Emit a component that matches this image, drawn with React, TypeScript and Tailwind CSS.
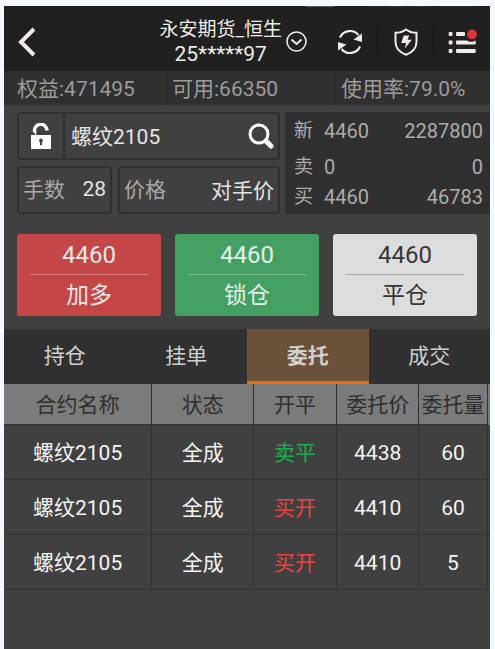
import { useState } from 'react';

const TABS = ['持仓', '挂单', '委托', '成交'];

const COLUMNS = ['合约名称', '状态', '开平', '委托价', '委托量'];

const ORDERS = [
  { id: 1, name: '螺纹2105', state: '全成', side: '卖平', price: 4438, lots: 60 },
  { id: 2, name: '螺纹2105', state: '全成', side: '买开', price: 4410, lots: 60 },
  { id: 3, name: '螺纹2105', state: '全成', side: '买开', price: 4410, lots: 5 },
];

const QUOTES = [
  { label: '新', price: '4460', volume: '2287800', row: 'h-9' },
  { label: '卖', price: '0', volume: '0', row: 'h-9' },
  { label: '买', price: '4460', volume: '46783', row: 'h-6' },
];

const ACTIONS = [
  { label: '加多', tone: 'bg-[#c44646] text-[#f3e6e6]', rule: 'bg-[#d77f7f]' },
  { label: '锁仓', tone: 'bg-[#43a062] text-[#e6f3ea]', rule: 'bg-[#7dbd91]' },
  { label: '平仓', tone: 'bg-[#dcdcdc] text-[#363636]', rule: 'bg-[#a8a8a8]' },
];

function StatusEdge() {
  return (
    <div className="flex h-0.5 justify-end gap-2 bg-[#202020] pr-4" aria-hidden="true">
      <span className="h-px w-7 bg-[#555]" />
      <span className="h-px w-5" />
      <span className="h-px w-3 bg-[#303030]" />
      <span className="h-px w-3 bg-[#3a3a3a]" />
      <span className="h-px w-5 bg-[#343434]" />
      <span className="h-px w-9 bg-[#303030]" />
    </div>
  );
}

function Header() {
  const action = 'flex h-full w-14 items-center justify-center pt-1';
  const divider = '-ml-px h-7 w-px bg-[#121212]';
  return (
    <header className="flex h-[63px] items-center bg-[#202020] text-[#efece6]">
      <button type="button" aria-label="返回" className="flex h-full w-14 items-center pt-1 pl-[14px]">
        <svg width="18" height="30" viewBox="0 0 18 30" fill="none" stroke="currentColor" strokeWidth="4">
          <path d="M16 2 3 15l13 13" />
        </svg>
      </button>
      <button type="button" aria-label="切换账户" className="flex flex-1 items-center justify-end gap-1 pt-1 pr-[15px]">
        <span className="flex flex-col text-center leading-6">
          <span className="text-[19px]">永安期货_恒生</span>
          <span className="text-[21px]">25*****97</span>
        </span>
        <svg width="21" height="21" viewBox="0 0 21 21" fill="none" stroke="currentColor" strokeWidth="1.6">
          <circle cx="10.5" cy="10.5" r="9.5" />
          <path d="m5.500 8.500 5 4.500 5-4.500" strokeWidth="2" />
        </svg>
      </button>
      <button type="button" aria-label="刷新" className={action}>
        <svg width="26" height="26" viewBox="0 0 26 26" fill="none" stroke="currentColor" strokeWidth="2.2">
          <path d="M3 8.500A11 11 0 0 1 21.500 6" />
          <path d="M23 17.500A11 11 0 0 1 4.500 20" />
          <path d="M25 4.500v8.500l-8.500-2.500z" fill="currentColor" stroke="none" />
          <path d="M1 21.500v-8.500l8.500 2.500z" fill="currentColor" stroke="none" />
        </svg>
      </button>
      <span className={divider} />
      <button type="button" aria-label="安全" className={action}>
        <svg width="24" height="28" viewBox="0 0 24 28" fill="none" stroke="currentColor" strokeWidth="2">
          <path d="M12 1.500C9 3.800 5.500 4.800 1.500 4.800V14c0 6.500 4.500 10.500 10.500 12.800C18 24.500 22.500 20.500 22.500 14V4.800C18.500 4.800 15 3.800 12 1.500z" />
          <path d="M9.800 7.500h5.400l-1.700 4.200h4.300L10.800 20.500l1.200-5.500H7.200z" fill="currentColor" stroke="none" />
        </svg>
      </button>
      <span className={divider} />
      <button type="button" aria-label="菜单" className={action}>
        <svg width="30" height="26" viewBox="0 0 30 26" fill="currentColor">
          <rect x="1.700" y="3" width="3.800" height="4" rx="1" />
          <rect x="9" y="3" width="9" height="4" rx="1" />
          <rect x="1.700" y="11.500" width="3.800" height="4" rx="1" />
          <path d="M10 11.500h10c2 1.700 6.500 1.700 8.700 0v3a1 1 0 0 1-1 1H10a1 1 0 0 1-1-1v-2a1 1 0 0 1 1-1z" />
          <rect x="1.700" y="20" width="3.800" height="4" rx="1" />
          <rect x="9" y="20" width="19.700" height="4" rx="1" />
          <circle cx="25" cy="5.300" r="4.900" fill="#dd3535" />
        </svg>
      </button>
    </header>
  );
}

function Stats() {
  return (
    <div className="grid h-[34px] grid-cols-[164fr_168fr_154fr] grid-rows-1 bg-[#303030] text-[21px] leading-[36px] text-[#9c9c9c]">
      <span className="border-r border-[#262626] pl-[13px]">权益:471495</span>
      <span className="border-r border-[#262626] pl-1">可用:66350</span>
      <span className="pl-[5px]">使用率:79.0%</span>
    </div>
  );
}

function TradeForm() {
  const box = 'flex h-12 min-w-0 items-center rounded-[3px] border-2 border-[#303030]';
  const field = 'h-full w-0 min-w-0 flex-1 bg-transparent pb-0.5 outline-none';
  const caption = 'shrink-0 pt-0.5 text-[#a8a8a8]';
  return (
    <div className="grid grid-cols-[263fr_205fr] gap-[5px] pt-[7px] pl-[13px]">
      <form className="flex min-w-0 flex-col gap-1.5 text-[21px] text-[#e4e4e4]">
        <div className={box}>
          <button type="button" aria-label="锁定合约" className="flex h-full w-[46px] items-center justify-center border-r-2 border-[#303030]">
            <svg width="20" height="26" viewBox="0 0 20 26">
              <path d="M3.500 9V7.500a6.200 6.200 0 0 1 12.400 0" fill="none" stroke="#fff" strokeWidth="3.400" />
              <path d="M0 12h20v14H0zM2 8h3.200v5H5z" fill="#fff" />
              <path d="M10 15.500a2 2 0 0 1 1 3.700V22H9v-2.800a2 2 0 0 1 1-3.700z" fill="#404040" />
            </svg>
          </button>
          <input aria-label="合约" defaultValue="螺纹2105" className={`${field} pl-1.5`} />
          <button type="button" aria-label="搜索合约" className="flex h-full items-center pr-1">
            <svg width="26" height="26" viewBox="0 0 26 26" fill="none" stroke="#fff">
              <circle cx="11" cy="11" r="9" strokeWidth="3" />
              <path d="m18 18 5 5" strokeWidth="5" strokeLinecap="round" />
            </svg>
          </button>
        </div>
        <div className="grid grid-cols-[95fr_162fr] gap-1.5">
          <div className={`${box} px-1`}>
            <label htmlFor="lots" className={caption}>手数</label>
            <input id="lots" defaultValue="28" className={`${field} text-right`} />
          </div>
          <div className={`${box} px-1`}>
            <label htmlFor="price" className={caption}>价格</label>
            <input id="price" defaultValue="对手价" className={`${field} text-right`} />
          </div>
        </div>
      </form>
      <div className="bg-[#303030] pr-[7px] pl-[9px] text-xl text-[#acacac]">
        {QUOTES.map((q) => (
          <div key={q.label} className={`flex items-center ${q.row}`}>
            <span className="w-[30px] pt-0.5 text-[19px]">{q.label}</span>
            <span className="pt-0.5">{q.price}</span>
            <span className="flex-1 pt-0.5 text-right">{q.volume}</span>
          </div>
        ))}
      </div>
    </div>
  );
}

function Actions() {
  return (
    <div className="grid grid-cols-3 gap-3.5 px-[13px] pt-5 pb-[13px]">
      {ACTIONS.map((a) => (
        <button key={a.label} type="button" className={`flex h-[82px] flex-col rounded-[3px] px-[13px] ${a.tone}`}>
          <span className="h-10 w-full text-2xl leading-[42px]">4460</span>
          <span className={`h-px w-full ${a.rule}`} />
          <span className="h-10 w-full text-[23px] leading-[42px]">{a.label}</span>
        </button>
      ))}
    </div>
  );
}

function Orders() {
  const cell = 'border-r border-b border-[#303030] px-0 pt-1 pb-0 text-center font-normal';
  return (
    <table className="w-full table-fixed border-separate border-spacing-0 text-[21px] text-[#f4f4f4]">
      <colgroup>
        <col className="w-[30.5%]" />
        <col className="w-[21%]" />
        <col className="w-[17%]" />
        <col className="w-[17%]" />
        <col className="w-[14%]" />
        <col />
      </colgroup>
      <thead>
        <tr className="h-[41px] bg-[#7b7b7b] text-[#2e2e2e]">
          {COLUMNS.map((c) => (
            <th key={c} scope="col" className={`${cell} whitespace-nowrap`}>{c}</th>
          ))}
          <td />
        </tr>
      </thead>
      <tbody>
        {ORDERS.map((o) => (
          <tr key={o.id} className="h-[55px]">
            <td className={cell}>{o.name}</td>
            <td className={cell}>{o.state}</td>
            <td className={`${cell} ${o.side === '卖平' ? 'text-[#18b04c]' : 'text-[#f04040]'}`}>{o.side}</td>
            <td className={cell}>{o.price}</td>
            <td className={cell}>{o.lots}</td>
            <td className="border-b border-[#303030]" />
          </tr>
        ))}
      </tbody>
    </table>
  );
}

export default function App() {
  const [tab, setTab] = useState('委托');
  return (
    <div className="flex min-h-screen flex-col bg-[#f5f8fc] pt-1.5 pr-[5px] pl-1 font-['Roboto','Noto_Sans_CJK_SC',sans-serif]">
      <main className="flex flex-1 flex-col bg-[#404040]">
        <StatusEdge />
        <Header />
        <Stats />
        <TradeForm />
        <Actions />
        <div role="tablist" className="grid h-[55px] grid-cols-4 bg-[#303030] text-[21px] text-[#d0d0d0]">
          {TABS.map((t) => (
            <button
              key={t}
              type="button"
              role="tab"
              aria-selected={t === tab}
              onClick={() => setTab(t)}
              className={`border-b-3 pt-1 ${t === tab ? 'border-[#ee6a08] bg-[#6b503a] font-bold' : 'border-transparent'}`}
            >
              {t}
            </button>
          ))}
        </div>
        <Orders />
      </main>
    </div>
  );
}
